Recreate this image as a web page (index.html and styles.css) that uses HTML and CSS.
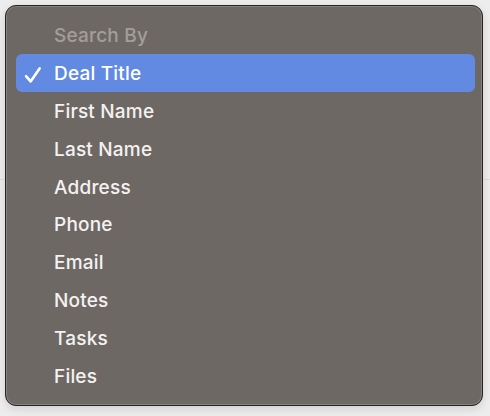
FILE: index.html
```html
<!DOCTYPE html>
<html lang="en">
<head>
    <meta charset="UTF-8">
    <meta name="viewport" content="width=device-width, initial-scale=1.0">
    <title>Search By</title>
    <link rel="stylesheet" href="styles.css">
</head>
<body>
    <div class="backdrop-line"></div>
    <div class="menu">
        <div class="menu-item menu-header">Search By</div>
        <div class="menu-item selected">
            <svg class="check" width="18" height="18" viewBox="0 0 18 18">
                <path d="M2 10.2 L6.6 15.4 L15.6 2.4" fill="none" stroke="#ffffff" stroke-width="2.6" stroke-linecap="round" stroke-linejoin="round"/>
            </svg>
            Deal Title
        </div>
        <div class="menu-item">First Name</div>
        <div class="menu-item">Last Name</div>
        <div class="menu-item">Address</div>
        <div class="menu-item">Phone</div>
        <div class="menu-item">Email</div>
        <div class="menu-item">Notes</div>
        <div class="menu-item">Tasks</div>
        <div class="menu-item">Files</div>
    </div>
</body>
</html>
```

FILE: styles.css
```css
/* Page behind the popup */
body {
    margin: 0;
    padding: 0;
    background-color: #ededed;
    font-family: Inter, "Noto Sans", sans-serif;
    height: 416px;
    overflow: hidden;
    position: relative;
}

/* faint line of the page under the menu */
.backdrop-line {
    position: absolute;
    top: 179px;
    left: 0;
    right: 0;
    height: 1px;
    background-color: #dcdcdc;
}

/* Popup menu */
.menu {
    position: relative;
    margin: 5px 0 0 5px;
    width: 478px;
    height: 401px;
    box-sizing: border-box;
    padding: 10px 7px 10px 10px;
    background-color: #6e6865;
    border: 1px solid #232323;
    border-radius: 11px;
    box-shadow: inset 0 0 0 1px rgba(255, 255, 255, 0.18), 0 3px 10px rgba(0, 0, 0, 0.12);
    display: flex;
    flex-direction: column;
}

.menu-item {
    height: 38px;
    display: flex;
    align-items: center;
    padding-left: 38px;
    padding-top: 1px;
    box-sizing: border-box;
    font-size: 19px;
    font-weight: 500;
    color: #f4f2f1;
    border-radius: 6px;
    position: relative;
    letter-spacing: 0.2px;
}

.menu-header {
    color: #a29e9b;
}

.selected {
    background-color: #628ae3;
    color: #ffffff;
}

.check {
    position: absolute;
    left: 8px;
    top: 12px;
}
```
